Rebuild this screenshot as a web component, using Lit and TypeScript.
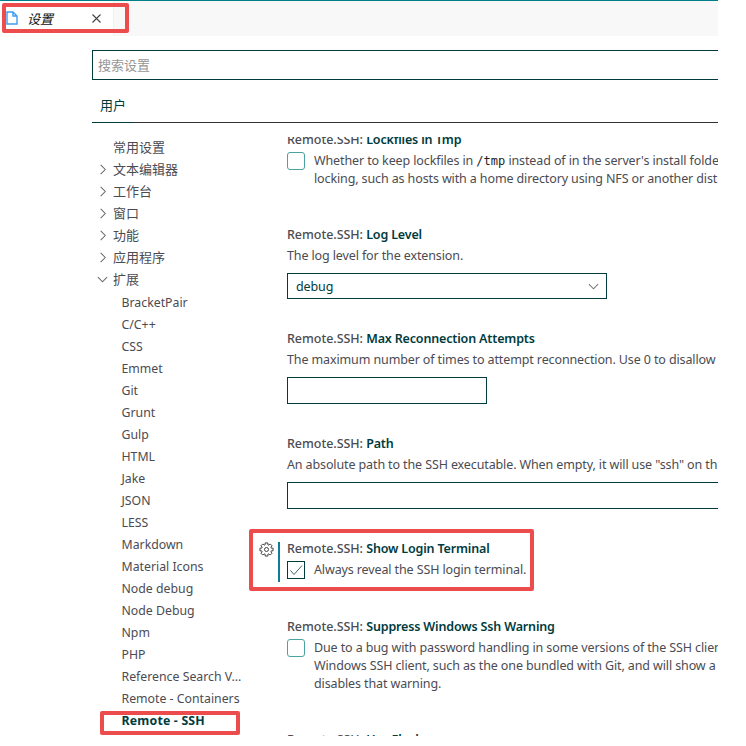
import { LitElement, html, css, svg, nothing } from "lit";
import { customElement } from "lit/decorators.js";
import { classMap } from "lit/directives/class-map.js";

interface Entry { label: string; kind?: "open" | "closed" | "leaf"; selected?: boolean; }
interface Setting {
  name: string;
  height: number;
  lines: unknown[];
  control: "check" | "select" | "number" | "text";
  checked?: boolean;
  focused?: boolean;
}

const groups: Entry[] = [
  { label: "常用设置" },
  { label: "文本编辑器", kind: "closed" },
  { label: "工作台", kind: "closed" },
  { label: "窗口", kind: "closed" },
  { label: "功能", kind: "closed" },
  { label: "应用程序", kind: "closed" },
  { label: "扩展", kind: "open" },
];
const extensions = ["BracketPair", "C/C++", "CSS", "Emmet", "Git", "Grunt", "Gulp", "HTML", "Jake", "JSON", "LESS",
  "Markdown", "Material Icons", "Node debug", "Node Debug", "Npm", "PHP", "Reference Search V...",
  "Remote - Containers", "Remote - SSH"];
const entries: Entry[] = [
  ...groups,
  ...extensions.map((label): Entry => ({ label, kind: "leaf", selected: label === "Remote - SSH" })),
];

const settings: Setting[] = [
  { name: "Lockfiles in Tmp", height: 95, control: "check", lines: [
    html`Whether to keep lockfiles in <code>/tmp</code> instead of in the server's install folde`,
    "locking, such as hosts with a home directory using NFS or another distr"] },
  { name: "Log Level", height: 104, control: "select", lines: ["The log level for the extension."] },
  { name: "Max Reconnection Attempts", height: 105, control: "number",
    lines: ["The maximum number of times to attempt reconnection. Use 0 to disallow r"] },
  { name: "Path", height: 105, control: "text",
    lines: ["An absolute path to the SSH executable. When empty, it will use \"ssh\" on th"] },
  { name: "Show Login Terminal", height: 78, control: "check", checked: true, focused: true,
    lines: ["Always reveal the SSH login terminal."] },
  { name: "Suppress Windows Ssh Warning", height: 113, control: "check", lines: [
    "Due to a bug with password handling in some versions of the SSH clien",
    "Windows SSH client, such as the one bundled with Git, and will show a",
    "disables that warning."] },
  { name: "Use Flock", height: 18, control: "text", lines: [] },
];

const chevron = (down: boolean) => html`<svg class="chev" viewBox="0 0 12 12">${
  down ? svg`<path d="M1 3.5 6 8.5 11 3.5"/>` : svg`<path d="M4 1 9 6 4 11"/>`}</svg>`;

const gearPath = (() => {
  const pts: string[] = [];
  for (let i = 0; i < 8; i++) {
    const a = (i * Math.PI) / 4;
    for (const [r, d] of [[5, -0.27], [6.7, -0.2], [6.7, 0.2], [5, 0.27]]) {
      pts.push(`${(7.5 + r * Math.sin(a + d)).toFixed(2)} ${(7.5 - r * Math.cos(a + d)).toFixed(2)}`);
    }
  }
  return `M${pts.join("L")}Z`;
})();

@customElement("app-root")
export class AppRoot extends LitElement {
  static styles = css`
    :host { display: block; width: 746px; height: 746px; background: #fff; overflow: hidden;
      font: 12.5px/18px "Noto Sans", "Noto Sans CJK SC", sans-serif; color: #4b4b52; }
    * { box-sizing: border-box; }
    svg { fill: none; flex: none; display: block; }
    .window { position: relative; width: 718px; height: 736px; overflow: hidden; display: flex; flex-direction: column; }
    .tabs { height: 36px; flex: none; border-top: 1px solid #007f87; background: #f8f8f8; display: flex; }
    .tab { width: 114px; background: #fff; border-right: 1px solid #f2f2f2; display: flex; align-items: center; padding-left: 6px; color: #111; }
    .file { width: 12px; height: 14px; stroke: #3f9cf0; stroke-width: 1.4; margin-top: -2px; }
    .tab span { font-size: 13px; font-style: italic; margin-left: 9px; width: 65px; }
    .close { width: 9px; height: 9px; stroke: #444; stroke-width: 1.1; }
    .search { margin: 14px 0 0 92px; height: 30px; flex: none; border: 1px solid #003b3e; border-right: 0; padding: 0 5px;
      display: flex; align-items: center; font-size: 13px; color: #969696; }
    .scope { margin-left: 92px; height: 43px; flex: none; border-bottom: 1px solid #333; display: flex; }
    .scope span { width: 42px; height: 43px; border-bottom: 1px solid #003b3e; padding: 16px 0 0 8px; font-size: 13px; color: #003b3e; }
    .body { flex: 1; min-height: 0; display: flex; padding-top: 14px; }
    .toc { width: 287px; flex: none; padding-left: 97px; }
    .entry { height: 22px; display: flex; align-items: center; font-size: 13px; white-space: nowrap; }
    .entry .chev, .gap { width: 11px; height: 11px; margin-right: 5px; }
    .entry span { margin-top: -1.4px; }
    .entry .chev { margin-top: -1px; }
    .chev { stroke: #666; stroke-width: 1.1; width: 11px; height: 11px; }
    .entry.leaf { padding-left: 24.5px; font-size: 12.3px; }
    .entry.leaf span { margin-top: 2px; }
    .selected { font-weight: 700; color: #003b3e; letter-spacing: 0.2px; }
    .list { flex: 1; min-width: 0; margin-left: -40px; padding-left: 40px; overflow: hidden; }
    .list > :first-child { margin-top: -6px; }
    .setting { position: relative; white-space: nowrap; letter-spacing: -0.12px; }
    .title { height: 18px; margin-bottom: 3px; font-weight: 500; letter-spacing: -0.04px; }
    .title b { font-weight: 600; color: #003b3e; letter-spacing: -0.16px; }
    .row { display: flex; gap: 9px; }
    .box { width: 18px; height: 18px; flex: none; border: 1px solid #4aa3a0; border-radius: 3px; }
    .box.on { border-color: #003b3e; border-radius: 0; }
    .box svg { width: 16px; height: 16px; stroke: #3d6769; }
    code { font: 12px/1 "DejaVu Sans Mono", monospace; letter-spacing: 0; color: #1e1e1e; }
    .field { margin-top: 8px; height: 27px; border: 1px solid #003b3e; display: flex; align-items: center; padding: 0 7px 0 8px; color: #003b3e; }
    .select { width: 320px; height: 26px; justify-content: space-between; }
    .select span { margin-top: 2px; }
    .select .chev { stroke: #777; }
    .number { width: 200px; }
    .text { border-right: 0; }
    .gear { position: absolute; left: -28.5px; top: 2px; width: 15px; height: 15px; stroke: #444; stroke-width: 1; }
    .bar { position: absolute; left: -9px; top: 2px; width: 2px; height: 40px; background: #0e7c9c; }
    .mark { position: absolute; border: 4px solid #ed4c4c; border-radius: 2px; }
    .m1 { left: 2px; top: 3px; width: 127px; height: 30px; }
    .m2 { left: 249px; top: 529px; width: 285px; height: 62px; }
    .m3 { left: 100px; top: 711px; width: 140px; height: 24px; }
  `;

  private field(s: Setting) {
    if (s.control === "check") return nothing;
    return html`<div class=${"field " + s.control}>${s.control === "select" ? html`<span>debug</span>${chevron(true)}` : nothing}</div>`;
  }

  private setting(s: Setting) {
    return html`<div class="setting" style="height:${s.height}px">
      ${s.focused ? html`<svg class="gear" viewBox="0 0 15 15"><path d=${gearPath}/><circle cx="7.5" cy="7.5" r="2"/></svg><div class="bar"></div>` : nothing}
      <div class="title">Remote.SSH: <b>${s.name}</b></div>
      <div class="row">${s.control === "check" ? html`<div class=${classMap({ box: true, on: !!s.checked })}>${
        s.checked ? html`<svg viewBox="0 0 16 16"><path d="M2.5 8.5 6 12.5 14 3.5"/></svg>` : nothing}</div>` : nothing}<div>${
        s.lines.map((l) => html`<div>${l}</div>`)}</div></div>
      ${this.field(s)}
    </div>`;
  }

  render() {
    return html`<div class="window">
      <div class="tabs"><div class="tab">
        <svg class="file" viewBox="0 0 12 14"><path d="M1 1H7L11 5V13H1ZM7 1V5H11"/></svg>
        <span>设置</span>
        <svg class="close" viewBox="0 0 9 9"><path d="M.5.5 8.5 8.5M8.5.5.5 8.5"/></svg>
      </div></div>
      <div class="search">搜索设置</div>
      <div class="scope"><span>用户</span></div>
      <div class="body">
        <div class="toc">${entries.map((e) => html`<div class=${classMap({ entry: true, leaf: e.kind === "leaf", selected: !!e.selected })}>${
          e.kind === "leaf" ? nothing : e.kind ? chevron(e.kind === "open") : html`<i class="gap"></i>`}<span>${e.label}</span></div>`)}</div>
        <div class="list">${settings.map((s) => this.setting(s))}</div>
      </div>
      <div class="mark m1"></div><div class="mark m2"></div><div class="mark m3"></div>
    </div>`;
  }
}
